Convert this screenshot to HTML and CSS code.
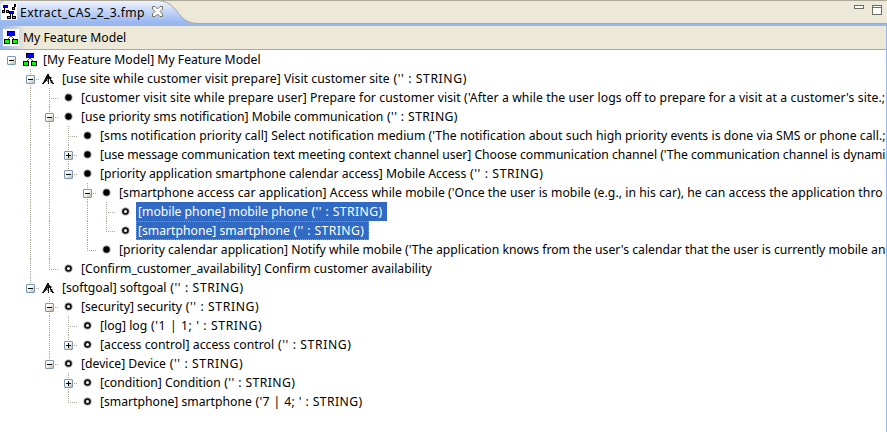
FILE: index.html
```html
<!DOCTYPE html>
<html lang="en">
<head>
<meta charset="utf-8">
<title>Extract_CAS_2_3.fmp</title>
<link rel="stylesheet" href="styles.css">
</head>
<body>
<svg class="defs" width="0" height="0" aria-hidden="true">
  <symbol id="model" viewBox="0 0 14 13" shape-rendering="crispEdges">
    <path d="M6 5h2v1h-2zM5 6h1v1h-1zM4 7h1v1h-1zM8 6h1v1h-1zM9 7h1v1h-1z" fill="#555"/>
    <path d="M3 0h8v5h-8zM0 8h6v5h-6zM8 8h6v5h-6z" fill="#000"/>
    <path d="M4 1h7v4h-7z" fill="#00f"/>
    <path d="M1 9h4v3h-4zM9 9h4v3h-4z" fill="#0f0"/>
  </symbol>
  <symbol id="group" viewBox="0 0 12 11" shape-rendering="crispEdges">
    <path d="M4 1h1v2h-1zM3 3h1v2h-1zM2 5h1v2h-1zM1 7h1v1h-1zM9 3h1v2h-1zM10 6h1v2h-1zM5 5h1v3h-1zM8 7h1v2h-1z" fill="#999"/>
    <path d="M5 0h2v2h1v1h1v3h1v2h1v1h1v1h-2v-1h-1v-2h-1v-2h-1v5h-1v-5h-1v2h-1v1h-1v1h-1v1h-2v-1h1v-1h1v-2h1v-2h1v-2h1z" fill="#111"/>
  </symbol>
  <symbol id="full" viewBox="0 0 9 9">
    <circle cx="4.5" cy="4.5" r="4.3" fill="#bbb"/><circle cx="4.5" cy="4.5" r="3.2" fill="#000"/>
  </symbol>
  <symbol id="open" viewBox="0 0 9 9">
    <circle cx="4.5" cy="4.5" r="4.3" fill="#bbb"/><circle cx="4.5" cy="4.5" r="3.3" fill="#111"/><circle cx="4.5" cy="4.5" r="1.5" fill="#fff"/>
  </symbol>
</svg>
<div class="editor">
  <header class="tabs">
    <svg class="tab-shape" width="200" height="26" viewBox="0 0 200 26">
      <defs><linearGradient id="tabfill" x1="0" y1="0" x2="0" y2="1"><stop offset="0" stop-color="#eef3fd"/><stop offset=".85" stop-color="#99b8f2"/><stop offset="1" stop-color="#99b4ef"/></linearGradient></defs>
      <path d="M0 1H160C181 1 175 23 198 23.5H200V26H0Z" fill="url(#tabfill)"/>
      <path d="M0 3.5L3 .5H158C180 2 175 23 198 23.5H200" fill="none" stroke="#aca899"/>
    </svg>
    <div class="tab">
      <svg class="file-icon" width="16" height="16" viewBox="0 0 16 16" shape-rendering="crispEdges">
        <path d="M0 0h16v16h-16z" fill="#fff"/>
        <path d="M2 1h5v3h-5zM1 6h3v3h-3zM5 6h3v3h-3zM13 0h2v3h-2zM11 3h3v3h-3zM8 7h5v3h-5zM6 12h4v3h-4zM11 12h4v3h-4zM3 4h1v2h-1zM9 10h1v2h-1zM11 10h1v2h-1z" fill="#000"/>
        <path d="M2 2h4v1h-4zM9 8h3v1h-3z" fill="#00f"/>
        <path d="M2 7h1v1h-1zM6 7h1v1h-1zM12 4h1v1h-1zM7 13h2v1h-2zM12 13h2v1h-2z" fill="#0f0"/>
      </svg>
      <span class="tab-title">Extract_CAS_2_3.fmp</span>
      <svg class="close" width="11" height="11" viewBox="0 0 11 11"><path d="M.5.5H3L5.5 3 8 .5h2.5V3L8 5.5 10.500 8v2.500H8L5.500 8 3 10.500H.5V8L3 5.500.5 3Z" fill="#fff" stroke="#77735f"/></svg>
    </div>
    <svg class="controls" width="29" height="12" viewBox="0 0 29 12" shape-rendering="crispEdges">
      <path d="M.5.5h9v3h-9zM18.500.5h9v9h-9zM18.500 2.500h9" fill="#fff" stroke="#6f6b61"/>
    </svg>
  </header>
  <div class="heading">
    <span class="heading-icon"><svg width="14" height="13"><use href="#model"/></svg></span>
    <span class="heading-title">My Feature Model</span>
  </div>
  <main class="tree">
    <div class="row"><i class="c root"><b class="box"></b></i><svg class="icon model"><use href="#model"/></svg><span class="label">[My Feature Model] My Feature Model</span></div>
    <div class="row"><i class="c"></i><i class="c tee"><b class="box"></b></i><svg class="icon group"><use href="#group"/></svg><span class="label mid">[use site while customer visit prepare] Visit customer site<span class="type"> ('' : STRING)</span></span></div>
    <div class="row"><i class="c"></i><i class="c bar"></i><i class="c tee"></i><svg class="icon"><use href="#full"/></svg><span class="label wide">[customer visit site while prepare user] Prepare for customer visit ('After a while the user logs off to prepare for a visit at a customer's site.;</span></div>
    <div class="row"><i class="c"></i><i class="c bar"></i><i class="c tee"><b class="box"></b></i><svg class="icon"><use href="#full"/></svg><span class="label">[use priority sms notification] Mobile communication<span class="type tight"> ('' : STRING)</span></span></div>
    <div class="row"><i class="c"></i><i class="c bar"></i><i class="c bar"></i><i class="c tee"></i><svg class="icon"><use href="#full"/></svg><span class="label mid">[sms notification priority call] Select notification medium ('The notification about such high priority events is done via SMS or phone call.;</span></div>
    <div class="row"><i class="c"></i><i class="c bar"></i><i class="c bar"></i><i class="c tee"><b class="box plus"></b></i><svg class="icon"><use href="#full"/></svg><span class="label narrow">[use message communication text meeting context channel user] Choose communication channel ('The communication channel is dynami</span></div>
    <div class="row"><i class="c"></i><i class="c bar"></i><i class="c bar"></i><i class="c end"><b class="box"></b></i><svg class="icon"><use href="#full"/></svg><span class="label">[priority application smartphone calendar access] Mobile Access<span class="type"> ('' : STRING)</span></span></div>
    <div class="row"><i class="c"></i><i class="c bar"></i><i class="c bar"></i><i class="c"></i><i class="c tee"><b class="box"></b></i><svg class="icon"><use href="#full"/></svg><span class="label mid">[smartphone access car application] Access while mobile ('Once the user is mobile (e.g., in his car), he can access the application thro</span></div>
    <div class="row"><i class="c"></i><i class="c bar"></i><i class="c bar"></i><i class="c"></i><i class="c bar"></i><i class="c tee"></i><svg class="icon"><use href="#open"/></svg><span class="label selected">[mobile phone] mobile phone<span class="type tight"> ('' : STRING)</span></span></div>
    <div class="row"><i class="c"></i><i class="c bar"></i><i class="c bar"></i><i class="c"></i><i class="c bar"></i><i class="c end"></i><svg class="icon"><use href="#open"/></svg><span class="label selected focused">[smartphone] smartphone<span class="type tight"> ('' : STRING)</span></span></div>
    <div class="row"><i class="c"></i><i class="c bar"></i><i class="c bar"></i><i class="c"></i><i class="c end"></i><svg class="icon"><use href="#full"/></svg><span class="label">[priority calendar application] Notify while mobile ('The application knows from the user's calendar that the user is currently mobile an</span></div>
    <div class="row"><i class="c"></i><i class="c bar"></i><i class="c end"></i><svg class="icon"><use href="#open"/></svg><span class="label">[Confirm_customer_availability] Confirm customer availability</span></div>
    <div class="row"><i class="c"></i><i class="c end"><b class="box"></b></i><svg class="icon group"><use href="#group"/></svg><span class="label">[softgoal] softgoal<span class="type"> ('' : STRING)</span></span></div>
    <div class="row"><i class="c"></i><i class="c"></i><i class="c tee"><b class="box"></b></i><svg class="icon"><use href="#open"/></svg><span class="label">[security] security<span class="type"> ('' : STRING)</span></span></div>
    <div class="row"><i class="c"></i><i class="c"></i><i class="c bar"></i><i class="c tee"></i><svg class="icon"><use href="#open"/></svg><span class="label">[log] log<span class="type"> ('1 | 1; ' : STRING)</span></span></div>
    <div class="row"><i class="c"></i><i class="c"></i><i class="c bar"></i><i class="c end"><b class="box plus"></b></i><svg class="icon"><use href="#open"/></svg><span class="label mid">[access control] access control<span class="type"> ('' : STRING)</span></span></div>
    <div class="row"><i class="c"></i><i class="c"></i><i class="c end"><b class="box"></b></i><svg class="icon"><use href="#open"/></svg><span class="label">[device] Device<span class="type"> ('' : STRING)</span></span></div>
    <div class="row"><i class="c"></i><i class="c"></i><i class="c"></i><i class="c tee"><b class="box plus"></b></i><svg class="icon"><use href="#open"/></svg><span class="label">[condition] Condition<span class="type tight"> ('' : STRING)</span></span></div>
    <div class="row"><i class="c"></i><i class="c"></i><i class="c"></i><i class="c end"></i><svg class="icon"><use href="#open"/></svg><span class="label">[smartphone] smartphone<span class="type tight"> ('7 | 4; ' : STRING)</span></span></div>
  </main>
</div>
</body>
</html>
```
FILE: styles.css
```css
* { box-sizing: border-box; }
body {
  margin: 0;
  overflow: hidden;
  background: #fff;
  color: #000;
  font: 12.2px/19px "Noto Sans", sans-serif;
}
.defs { display: none; }
.editor { display: flex; flex-direction: column; height: 432px; }
svg { display: block; flex: none; }

/* tab strip */
.tabs {
  position: relative;
  display: flex;
  justify-content: space-between;
  height: 26px;
  background: #ece9d8;
  border-top: 1px solid #aca899;
  box-shadow: inset 0 -2px #99b4ef, inset 0 -3px #aca899;
}
.tab-shape { position: absolute; left: 0; top: -1px; }
.tab { position: relative; display: flex; height: 24px; padding-left: 1px; }
.file-icon { margin-top: 3px; }
.tab-title { width: 124px; margin: 2px 8px 0 3px; white-space: nowrap; letter-spacing: .35px; }
.close { margin-top: 5px; }
.controls { margin: 4px 4px 0 0; }

/* model heading */
.heading {
  display: flex;
  height: 24px;
  background: linear-gradient(90deg, #98b4e8, #ece9d8 26px);
  border-bottom: 1px solid #aca899;
  border-right: 1px solid #99b4ef;
}
.heading-icon { width: 16px; height: 17px; margin: 3px 4px 0 3px; padding: 2px 1px; background: #fff; }
.heading-title { margin-top: 2px; }

/* tree */
.tree { flex: 1; padding-left: 2px; overflow: hidden; border-right: 1px solid #99b4ef; }
.row { display: flex; height: 19px; white-space: nowrap; }
.c {
  --v: repeating-linear-gradient(#aca899 0 1px, transparent 1px 2px);
  --h: repeating-linear-gradient(90deg, #aca899 0 1px, transparent 1px 2px);
  flex: none;
  width: 19px;
  height: 19px;
  padding: 6px 0 0 5px;
  background-repeat: no-repeat;
}
.bar { background-image: var(--v); background-size: 1px 19px; background-position: 9px 0; }
.tee, .end { background-image: var(--v), var(--h); background-position: 9px 0, 9px 10px; }
.tee { background-size: 1px 19px, 10px 1px; }
.end { background-size: 1px 10px, 10px 1px; }
.box {
  display: block;
  width: 9px;
  height: 9px;
  border: 1px solid #7898b5;
  border-radius: 1px;
  background:
    linear-gradient(#000, #000) 1px 3px / 5px 1px no-repeat,
    linear-gradient(135deg, #fff 35%, #c3baa9);
}
.plus {
  background:
    linear-gradient(#000, #000) 1px 3px / 5px 1px no-repeat,
    linear-gradient(#000, #000) 3px 1px / 1px 5px no-repeat,
    linear-gradient(135deg, #fff 35%, #c3baa9);
}
.icon { width: 9px; height: 9px; margin: 5px 6px 0 5px; }
.icon.model { width: 14px; height: 13px; margin: 3px 4px 0 2px; }
.icon.group { width: 12px; height: 11px; margin: 5px 6px 0 2px; }
.label { padding: 0 2px; }
.narrow { letter-spacing: -.04px; }
.mid { letter-spacing: .05px; }
.wide { letter-spacing: .1px; }
.type { letter-spacing: .6px; }
.tight { letter-spacing: .4px; }
.selected { padding-right: 5px; background: #316ac5; color: #fff; }
.focused { outline: 1px dotted #ce953a; outline-offset: -1px; }
```
